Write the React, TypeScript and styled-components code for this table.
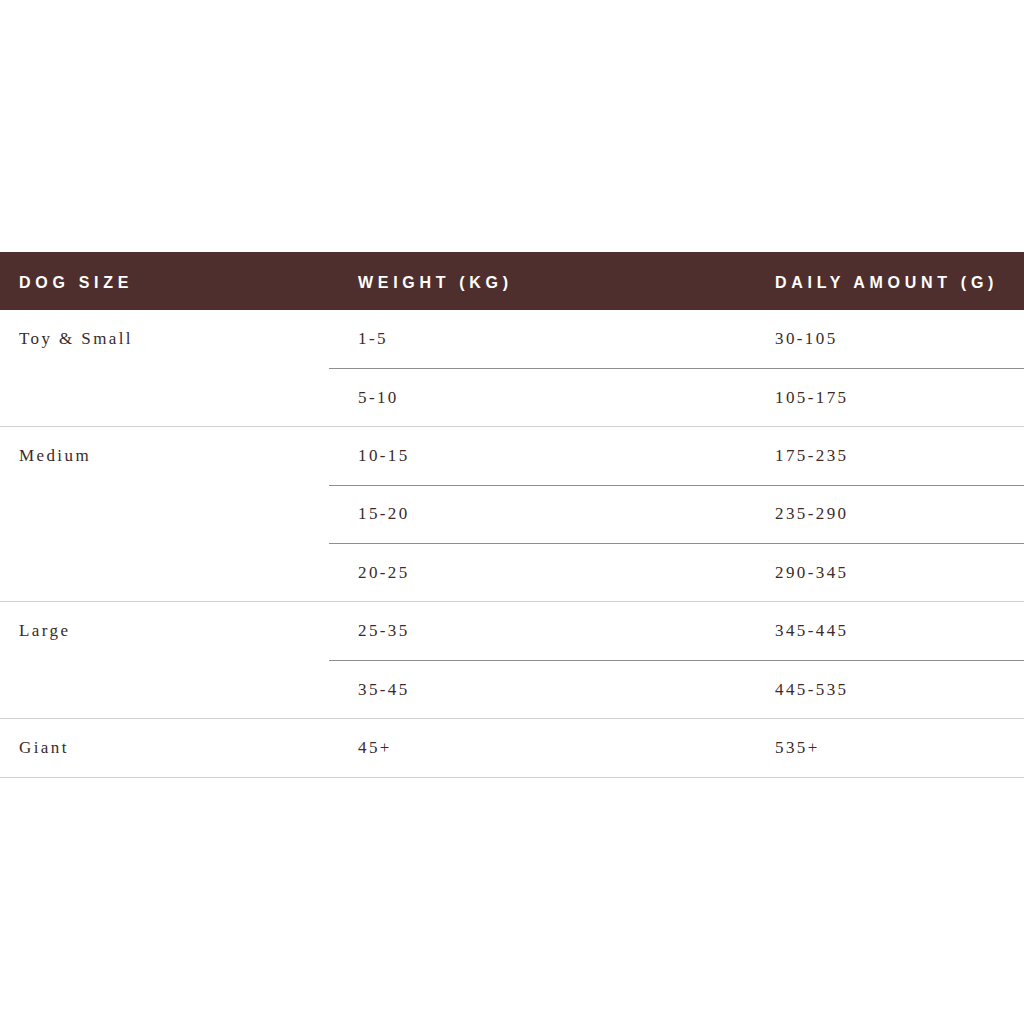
import styled, { createGlobalStyle } from "styled-components";

const GlobalStyle = createGlobalStyle`
    html, body {
        margin: 0;
        padding: 0;
        background: #ffffff;
    }
`;

const Page = styled.div`
    width: 1024px;
    height: 1024px;
    padding-top: 252px;
    box-sizing: border-box;
    background: #ffffff;
`;

const Table = styled.table`
    width: 1024px;
    border-collapse: collapse;
    table-layout: fixed;
`;

const HeadCell = styled.th<{ $w: number; $pad: number }>`
    width: ${(p) => p.$w}px;
    height: 58px;
    padding: 3px 0 0 ${(p) => p.$pad}px;
    background: #4f2f2d;
    color: #ffffff;
    font-family: "Liberation Sans", Arial, sans-serif;
    font-weight: 700;
    font-size: 16px;
    letter-spacing: 4.7px;
    text-align: left;
    text-transform: uppercase;
    vertical-align: middle;
    box-sizing: border-box;
    white-space: nowrap;
`;

const Cell = styled.td<{ $pad: number; $sub?: boolean }>`
    height: 58.4px;
    padding: 0 0 0 ${(p) => p.$pad}px;
    font-family: "Liberation Serif", "Times New Roman", serif;
    font-size: 17px;
    letter-spacing: 2.4px;
    color: #3b2a28;
    vertical-align: ${(p) => (p.$sub ? "middle" : "top")};
    border-bottom: 1px solid ${(p) => (p.$sub ? "#8e8e8e" : "#d2d2d2")};
    box-sizing: border-box;
`;

const SizeCell = styled(Cell)`
    padding-top: 19px;
`;

const GroupEnd = styled.tr`
    td {
        border-bottom-color: #d2d2d2;
    }
`;

const Row = styled.tr``;

type Group = { size: string; rows: [string, string][] };

const groups: Group[] = [
    { size: "Toy & Small", rows: [["1-5", "30-105"], ["5-10", "105-175"]] },
    {
        size: "Medium",
        rows: [
            ["10-15", "175-235"],
            ["15-20", "235-290"],
            ["20-25", "290-345"],
        ],
    },
    { size: "Large", rows: [["25-35", "345-445"], ["35-45", "445-535"]] },
    { size: "Giant", rows: [["45+", "535+"]] },
];

export default function App() {
    return (
        <>
            <GlobalStyle />
            <Page>
                <Table>
                    <thead>
                        <tr>
                            <HeadCell $w={329} $pad={19}>Dog Size</HeadCell>
                            <HeadCell $w={417} $pad={29}>Weight (kg)</HeadCell>
                            <HeadCell $w={278} $pad={29}>Daily Amount (g)</HeadCell>
                        </tr>
                    </thead>
                    <tbody>
                        {groups.map((g) =>
                            g.rows.map(([w, a], i) => {
                                const last = i === g.rows.length - 1;
                                const R = last ? GroupEnd : Row;
                                return (
                                    <R key={g.size + w}>
                                        {i === 0 && (
                                            <SizeCell $pad={19} rowSpan={g.rows.length}>
                                                {g.size}
                                            </SizeCell>
                                        )}
                                        <Cell $pad={29} $sub>
                                            {w}
                                        </Cell>
                                        <Cell $pad={29} $sub>
                                            {a}
                                        </Cell>
                                    </R>
                                );
                            })
                        )}
                    </tbody>
                </Table>
            </Page>
        </>
    );
}
